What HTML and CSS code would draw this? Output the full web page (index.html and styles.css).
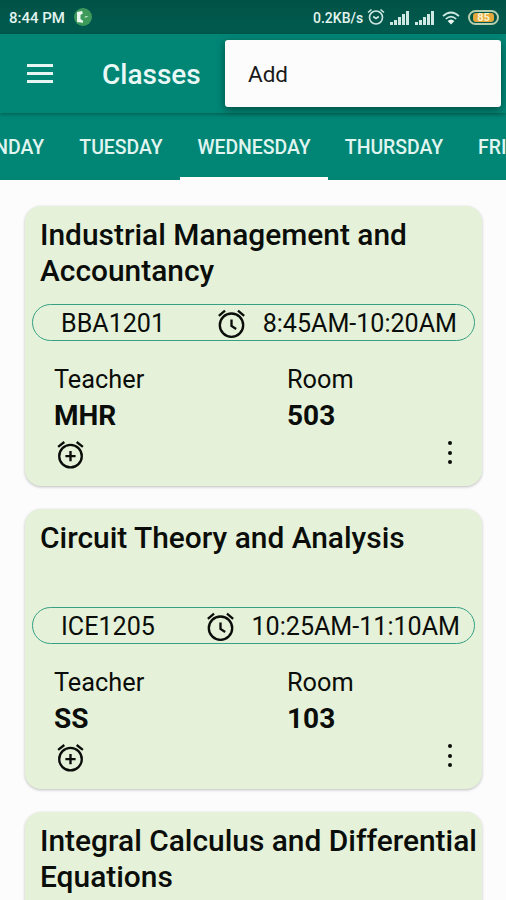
FILE: index.html
```
<!DOCTYPE html>
<html lang="en">
<head>
    <meta charset="UTF-8">
    <title>Classes</title>
    <link rel="stylesheet" href="styles.css">
</head>
<body>
    <svg class="sprite">
        <symbol id="alarm" viewBox="0 0 24 24">
            <circle cx="12" cy="13.200" r="8.500" />
            <path d="M2.800 6.500L7.300 2.700M21.200 6.500L16.700 2.700M12 9V13.800L15.400 16" />
        </symbol>
        <symbol id="alarm-add" viewBox="0 0 24 24">
            <circle cx="12" cy="13.200" r="8.200" />
            <path d="M3 6.500L7.500 2.900M21 6.500L16.500 2.900M12 9.500V16.900M8.300 13.200H15.700" />
        </symbol>
        <symbol id="signal" viewBox="0 0 20 15">
            <path d="M0 12h3v3H0zM4 10h3v5H4zM8 7h3v8H8zM12 4h3v11h-3zM16 1h3v14h-3z" />
        </symbol>
    </svg>

    <div class="status-bar">
        <span class="hora">8:44 PM</span>
        <svg class="app-dot" viewBox="0 0 18 18">
            <circle cx="9" cy="9" r="9" fill="#3d9a5b" />
            <path d="M8 3L3 4v10l6 .8v-2L6.500 11V7L9 5.200z" fill="#e9f7ee" />
            <path d="M10 9.200l2-1.200 2.500.6-2.500 1z" fill="#c5ecd0" />
        </svg>
        <div class="status-right">
            <span class="speed">0.2KB/s</span>
            <svg class="st-alarm" viewBox="0 0 18 18">
                <circle cx="9" cy="9.500" r="6.500" />
                <path d="M1 4.500L4.500 1.500M17 4.500L13.500 1.500M6.200 8.500L9 10.500L11.800 8.500" />
            </svg>
            <svg class="st-signal"><use href="#signal" /></svg>
            <svg class="st-signal"><use href="#signal" /></svg>
            <svg class="st-wifi" viewBox="0 0 18 14">
                <path d="M1 5.200Q9 -2.200 17 5.200M3.800 8Q9 3.200 14.200 8" />
                <path class="fill" d="M9 13.500L5.600 10Q9 7 12.400 10z" />
            </svg>
            <span class="battery"><span class="charge">85</span></span>
        </div>
    </div>

    <div class="toolbar">
        <div class="menu-icon"><i></i><i></i><i></i></div>
        <h1>Classes</h1>
        <div class="popup">Add</div>
    </div>

    <div class="tabs">
        <span class="tab monday">MONDAY</span>
        <span class="tab tuesday">TUESDAY</span>
        <span class="tab active">WEDNESDAY</span>
        <span class="tab thursday">THURSDAY</span>
        <span class="tab friday">FRIDAY</span>
    </div>

    <div class="list">
        <div class="card">
            <h2>Industrial Management and Accountancy</h2>
            <div class="chip">
                <span>BBA1201</span>
                <span class="time"><svg class="icon"><use href="#alarm" /></svg><span>8:45AM-10:20AM</span></span>
            </div>
            <div class="info">
                <div>Teacher<b>MHR</b></div>
                <div>Room<b>503</b></div>
            </div>
            <div class="actions">
                <svg class="icon"><use href="#alarm-add" /></svg>
                <div class="dots"><i></i><i></i><i></i></div>
            </div>
        </div>

        <div class="card">
            <h2>Circuit Theory and Analysis</h2>
            <div class="chip late">
                <span>ICE1205</span>
                <span class="time"><svg class="icon"><use href="#alarm" /></svg><span>10:25AM-11:10AM</span></span>
            </div>
            <div class="info">
                <div>Teacher<b>SS</b></div>
                <div>Room<b>103</b></div>
            </div>
            <div class="actions">
                <svg class="icon"><use href="#alarm-add" /></svg>
                <div class="dots"><i></i><i></i><i></i></div>
            </div>
        </div>

        <div class="card">
            <h2>Integral Calculus and Differential Equations</h2>
        </div>
    </div>
</body>
</html>
```

FILE: styles.css
```
:root {
    --teal: #018676;
    --card: #e5f2d9;
    --page: #fcfcfc;
}

* {
    box-sizing: border-box;
}

body {
    margin: 0;
    height: 900px;
    overflow: hidden;
    display: flex;
    flex-direction: column;
    background: var(--page);
    font-family: Roboto, "Liberation Sans", sans-serif;
    color: #0b0d0a;
}

.sprite {
    position: absolute;
    width: 0;
    height: 0;
}

.status-bar {
    flex: none;
    height: 34px;
    padding: 0 7px 0 9px;
    display: flex;
    align-items: center;
    background: linear-gradient(#015246, #015b4f);
    color: #e2f4ef;
    font-size: 15px;
    font-weight: 500;
}

.hora {
    width: 65px;
    padding-top: 1px;
}

.app-dot {
    width: 18px;
    height: 18px;
}

.status-right {
    margin-left: auto;
    display: flex;
    align-items: center;
}

.speed {
    font-size: 14px;
    width: 54px;
    padding-top: 1px;
    white-space: nowrap;
}

.st-alarm {
    width: 18px;
    height: 18px;
    fill: none;
    stroke: #cfe9e2;
    stroke-width: 1.6;
}

.st-signal {
    width: 20px;
    height: 15px;
    margin-left: 5px;
    fill: #cfe9e2;
}

.st-wifi {
    width: 18px;
    height: 14px;
    margin: 2px 8px 0 7px;
    fill: none;
    stroke: #cfe9e2;
    stroke-width: 1.7;
}

.st-wifi .fill {
    fill: #e8f6f2;
    stroke: none;
}

.battery {
    width: 31px;
    height: 15px;
    padding: 1px 3px;
    border: 2px solid #b5cfae;
    border-radius: 8px;
}

.charge {
    display: block;
    height: 9px;
    border-radius: 3px;
    background: #e5a83a;
    color: #fff3d2;
    font-size: 11px;
    line-height: 10px;
    font-weight: 700;
    text-align: center;
}

.toolbar {
    flex: none;
    position: relative;
    z-index: 2;
    height: 79px;
    padding-left: 27px;
    display: flex;
    align-items: center;
    background: var(--teal);
    box-shadow: 0 1px 4px rgba(0, 50, 40, 0.55);
}

.menu-icon {
    display: flex;
    flex-direction: column;
    gap: 5px;
    width: 26px;
}

.menu-icon i {
    height: 3px;
    background: #e6f6f3;
}

h1 {
    margin: 2px 0 0 49px;
    font-size: 28px;
    line-height: 34px;
    font-weight: 500;
    color: #e9f8f5;
}

/* overflow menu, open over the toolbar */
.popup {
    position: absolute;
    top: 6px;
    right: 5px;
    width: 276px;
    height: 67px;
    padding-left: 23px;
    border-radius: 3px;
    background: #fcfcfc;
    box-shadow: 0 3px 8px rgba(0, 40, 30, 0.6);
    font-size: 22.5px;
    line-height: 69px;
    color: #1a1a1a;
}

.tabs {
    flex: none;
    height: 67px;
    display: flex;
    margin-left: -59px;
    width: 640px;
    background: var(--teal);
    color: #e0f5f0;
    font-size: 19.4px;
    font-weight: 500;
    line-height: 70px;
    text-align: center;
}

.tab {
    flex: none;
}

.monday {
    width: 121px;
    padding-left: 5px;
}

.tuesday {
    width: 118px;
}

.tab.active {
    width: 148px;
    border-bottom: 3px solid var(--page);
}

.thursday {
    width: 132px;
}

.friday {
    width: 110px;
    padding-left: 18px;
    text-align: left;
}

.list {
    display: flex;
    flex-direction: column;
    gap: 23px;
    padding: 26px 24px 0 25px;
}

.card {
    flex: none;
    height: 280px;
    padding: 11px 0 0;
    border-radius: 16px;
    background: var(--card);
    box-shadow: 0 1px 3px rgba(0, 0, 0, 0.25);
}

h2 {
    margin: 0 0 14px;
    padding-left: 15px;
    height: 73px;
    font-size: 29.9px;
    line-height: 36px;
    font-weight: 500;
}

.chip {
    height: 37px;
    margin: 0 7px;
    padding: 1px 17px 0 28px;
    display: flex;
    align-items: center;
    justify-content: space-between;
    border: 1.5px solid #35a084;
    border-radius: 19px;
    font-size: 25.1px;
}

.chip.late {
    padding-right: 14px;
}

.time {
    display: flex;
    align-items: center;
    gap: 15px;
}

.icon {
    width: 33px;
    height: 33px;
    fill: none;
    stroke: #0b0d0a;
    stroke-width: 1.7;
}

.info {
    display: grid;
    grid-template-columns: 233px 1fr;
    padding: 22px 0 0 29px;
    font-size: 25.3px;
    line-height: 34px;
}

.info b {
    display: block;
    font-size: 28px;
    line-height: 37px;
    font-weight: 700;
}

.actions {
    display: flex;
    justify-content: space-between;
    align-items: flex-start;
    padding: 4px 30px 0 29px;
}

.dots {
    display: flex;
    flex-direction: column;
    gap: 5.5px;
    margin-top: 3px;
}

.dots i {
    width: 4px;
    height: 4px;
    border-radius: 50%;
    background: #0b0d0a;
}
```
